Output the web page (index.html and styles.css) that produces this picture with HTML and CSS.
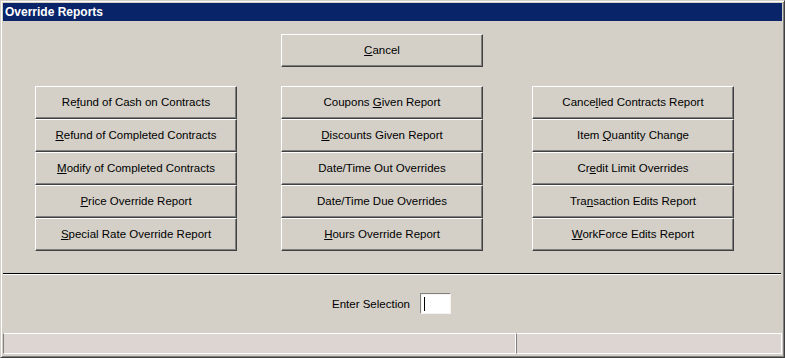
FILE: index.html
```html
<!DOCTYPE html>
<html lang="en">

<head>
  <meta charset="UTF-8">
  <title>Override Reports</title>
  <link rel="stylesheet" href="styles.css">
</head>

<body>
  <div class="window">
    <div class="title-bar">Override Reports</div>
    <div class="content">
      <div class="cancel-row">
        <button class="win-btn"><u>C</u>ancel</button>
      </div>
      <div class="report-grid">
        <div class="report-col">
          <button class="win-btn">Re<u>f</u>und of Cash on Contracts</button>
          <button class="win-btn"><u>R</u>efund of Completed Contracts</button>
          <button class="win-btn"><u>M</u>odify of Completed Contracts</button>
          <button class="win-btn"><u>P</u>rice Override Report</button>
          <button class="win-btn"><u>S</u>pecial Rate Override Report</button>
        </div>
        <div class="report-col">
          <button class="win-btn">Coupons <u>G</u>iven Report</button>
          <button class="win-btn"><u>D</u>iscounts Given Report</button>
          <button class="win-btn">Date/Time Out Overrides</button>
          <button class="win-btn">Date/Time Due Overrides</button>
          <button class="win-btn"><u>H</u>ours Override Report</button>
        </div>
        <div class="report-col last">
          <button class="win-btn">Cance<u>l</u>led Contracts Report</button>
          <button class="win-btn">Item <u>Q</u>uantity Change</button>
          <button class="win-btn">Cr<u>e</u>dit Limit Overrides</button>
          <button class="win-btn">Tra<u>n</u>saction Edits Report</button>
          <button class="win-btn"><u>W</u>orkForce Edits Report</button>
        </div>
      </div>
      <div class="separator"></div>
      <div class="selection-row">
        <label for="selection">Enter Selection</label>
        <div class="selection-input" id="selection"><span class="caret"></span></div>
      </div>
    </div>
    <div class="status-bar">
      <div class="status-panel first"></div>
      <div class="status-panel"></div>
    </div>
  </div>
</body>

</html>
```

FILE: styles.css
```css
body {
  margin: 0;
  font-family: "Liberation Sans", Arial, sans-serif;
  font-size: 11.5px;
  color: #000;
}

.window {
  width: 785px;
  height: 358px;
  box-sizing: border-box;
  background-color: #d4d0c8;
  border-top: 1px solid #d4d0c8;
  border-left: 1px solid #d4d0c8;
  border-right: 1px solid #404040;
  border-bottom: 1px solid #404040;
  box-shadow: inset 1px 1px #ffffff, inset -1px -1px #808080;
  padding: 2px;
  display: flex;
  flex-direction: column;
}

.title-bar {
  height: 18px;
  line-height: 18px;
  background-color: #0a246a;
  color: #fff;
  font-weight: bold;
  font-size: 12px;
  padding-left: 2px;
}

.content {
  flex: 1;
  display: flex;
  flex-direction: column;
}

.cancel-row {
  padding-top: 13px;
  padding-left: 278px;
}

.win-btn {
  display: block;
  width: 202px;
  height: 33px;
  margin: 0;
  padding: 0 0 1px 0;
  background-color: #d4d0c8;
  border: none;
  border-top: 1px solid #ffffff;
  border-left: 1px solid #ffffff;
  border-right: 1px solid #404040;
  border-bottom: 1px solid #404040;
  box-shadow: inset -1px -1px #808080;
  font-family: "Liberation Sans", Arial, sans-serif;
  font-size: 11.5px;
  color: #000;
  text-align: center;
}

.report-grid {
  display: flex;
  padding-top: 19px;
  padding-left: 32px;
}

.report-col {
  display: flex;
  flex-direction: column;
  margin-right: 44px;
}

.report-col.last {
  margin-left: 5px;
  margin-right: 0;
}

.separator {
  margin-top: 22px;
  height: 1px;
  background-color: #000;
  border-bottom: 1px solid #ffffff;
  margin-right: 1px;
}

.selection-row {
  display: flex;
  align-items: center;
  padding-left: 329px;
  margin-top: 19px;
}

.selection-row label {
  margin-right: 11px;
}

.selection-input {
  width: 26px;
  height: 18px;
  background-color: #fff;
  border: 1px solid #f4f3f0;
  box-shadow: -1px -1px #808080;
  display: flex;
  align-items: center;
  padding-left: 2px;
}

.caret {
  width: 1px;
  height: 14px;
  background-color: #000;
}

.status-bar {
  display: flex;
  height: 21px;
  margin-bottom: 1px;
}

.status-panel {
  flex: 1;
  background-color: #dcd5d1;
  border-top: 1px solid #ffffff;
  border-bottom: 1px solid #ffffff;
  border-right: 1px solid #ffffff;
  border-left: 1px solid #808080;
}

.status-panel.first {
  flex: 0 0 513px;
  box-sizing: border-box;
}
```
